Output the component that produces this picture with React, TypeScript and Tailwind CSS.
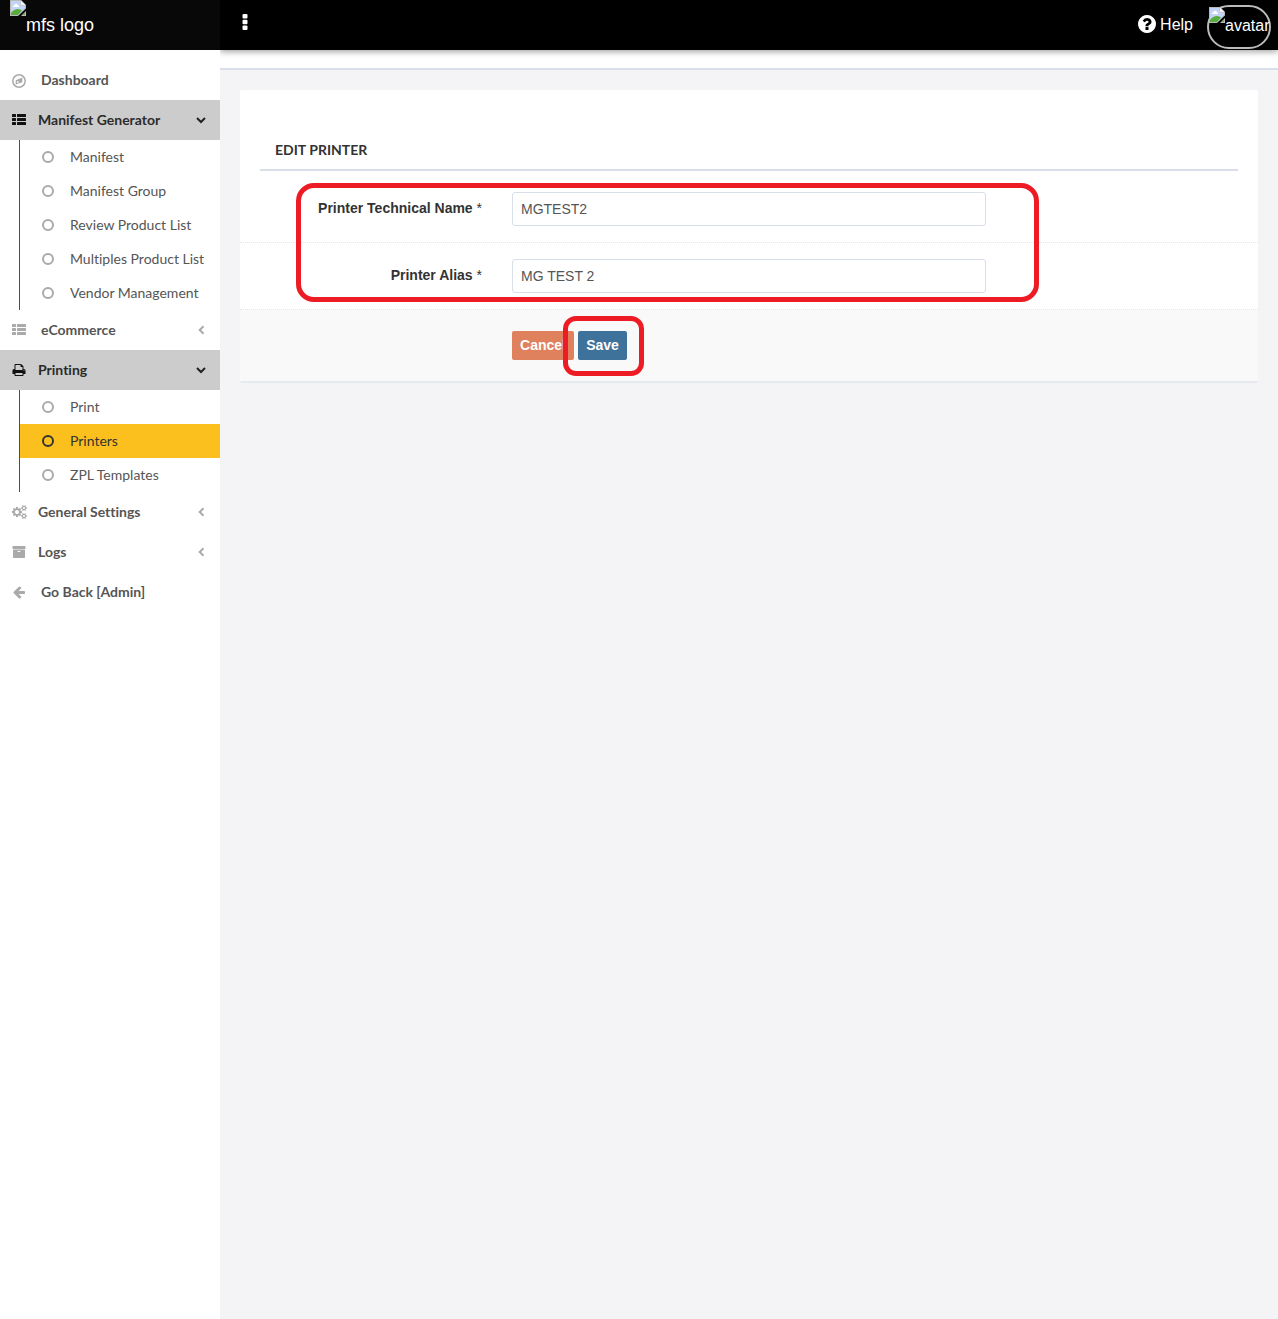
import React, { useState } from 'react';

const ICON_PATHS = {
    print: 'M448 1536h896v-256h-896v256zm0-640h896v-384h-160q-40 0-68-28t-28-68v-160h-640v640zm1152 64q0-26-19-45t-45-19-45 19-19 45 19 45 45 19 45-19 19-45zm128 0v416q0 13-9.5 22.5t-22.5 9.5h-224v160q0 40-28 68t-68 28h-960q-40 0-68-28t-28-68v-160h-224q-13 0-22.5-9.5t-9.5-22.5v-416q0-79 56.5-135.5t135.5-56.5h64v-544q0-40 28-68t68-28h672q40 0 88 20t76 48l152 152q28 28 48 76t20 88v256h64q79 0 135.5 56.5t56.5 135.5z',
    cogs: 'M896 896q0-106-75-181t-181-75-181 75-75 181 75 181 181 75 181-75 75-181zm768 512q0-52-38-90t-90-38-90 38-38 90q0 53 37.5 90.5t90.5 37.5 90.5-37.5 37.5-90.5zm0-1024q0-52-38-90t-90-38-90 38-38 90q0 53 37.5 90.5t90.5 37.5 90.5-37.5 37.5-90.5zm-384 421v185q0 10-7 19.5t-16 10.5l-155 24q-11 35-32 76 34 48 90 115 7 11 7 20 0 12-7 19-23 30-82.5 89.5t-78.5 59.5q-11 0-21-7l-115-90q-37 19-77 31-11 108-23 155-7 24-30 24h-186q-11 0-20-7.5t-10-17.5l-23-153q-34-10-75-31l-118 89q-7 7-20 7-11 0-21-8-144-133-144-160 0-9 7-19 10-14 41-53t47-61q-23-44-35-82l-152-24q-10-1-17-9.5t-7-19.5v-185q0-10 7-19.5t16-10.5l155-24q11-35 32-76-34-48-90-115-7-11-7-20 0-12 7-20 22-30 82-89t79-59q11 0 21 7l115 90q34-18 77-32 11-108 23-154 7-24 30-24h186q11 0 20 7.5t10 17.5l23 153q34 10 75 31l118-89q8-7 20-7 11 0 21 8 144 133 144 160 0 8-7 19-12 16-42 54t-45 60q23 48 34 82l152 23q10 2 17 10.5t7 19.5zm640 533v140q0 16-149 31-12 27-30 52 51 113 51 138 0 4-4 7-122 71-124 71-8 0-46-47t-52-68q-20 2-30 2t-30-2q-14 21-52 68t-46 47q-2 0-124-71-4-3-4-7 0-25 51-138-18-25-30-52-149-15-149-31v-140q0-16 149-31 13-29 30-52-51-113-51-138 0-4 4-7 4-2 35-20t59-34 30-16q8 0 46 46.5t52 67.5q20-2 30-2t30 2q51-71 92-112l6-2q4 0 124 70 4 3 4 7 0 25-51 138 17 23 30 52 149 15 149 31zm0-1024v140q0 16-149 31-12 27-30 52 51 113 51 138 0 4-4 7-122 71-124 71-8 0-46-47t-52-68q-20 2-30 2t-30-2q-14 21-52 68t-46 47q-2 0-124-71-4-3-4-7 0-25 51-138-18-25-30-52-149-15-149-31v-140q0-16 149-31 13-29 30-52-51-113-51-138 0-4 4-7 4-2 35-20t59-34 30-16q8 0 46 46.5t52 67.5q20-2 30-2t30 2q51-71 92-112l6-2q4 0 124 70 4 3 4 7 0 25-51 138 17 23 30 52 149 15 149 31z',
    archive: 'M1088 832q0-26-19-45t-45-19h-256q-26 0-45 19t-19 45 19 45 45 19h256q26 0 45-19t19-45zm576-192v960q0 26-19 45t-45 19h-1408q-26 0-45-19t-19-45v-960q0-26 19-45t45-19h1408q26 0 45 19t19 45zm64-448v256q0 26-19 45t-45 19h-1536q-26 0-45-19t-19-45v-256q0-26 19-45t45-19h1536q26 0 45 19t19 45z',
    arrowLeft: 'M1664 896v128q0 53-32.5 90.5t-84.5 37.5h-704l293 294q38 36 38 90t-38 90l-75 76q-37 37-90 37-52 0-91-37l-651-652q-37-37-37-90 0-52 37-91l651-650q38-38 91-38 52 0 90 38l75 74q38 38 38 91t-38 91l-293 293h704q52 0 84.5 37.5t32.5 90.5z',
    question: 'M1024 1376v-192q0-14-9-23t-23-9h-192q-14 0-23 9t-9 23v192q0 14 9 23t23 9h192q14 0 23-9t9-23zm256-672q0-88-55.5-163t-138.5-116-170-41q-243 0-371 213-15 24 8 42l132 100q7 6 19 6 16 0 25-12 53-68 86-92 34-24 86-24 48 0 85.5 26t37.5 59q0 38-20 61t-68 45q-63 28-115.5 86.5t-52.5 125.5v36q0 14 9 23t23 9h192q14 0 23-9t9-23q0-19 21.5-49.5t54.5-49.5q32-18 49-28.5t46-35 44.5-48 28-60.5 12.5-81zm384 192q0 209-103 385.5t-279.5 279.5-385.5 103-385.5-103-279.5-279.5-103-385.5 103-385.5 279.5-279.5 385.5-103 385.5 103 279.5 279.5 103 385.5z',
};

type IconName = 'compass' | 'list' | 'print' | 'cogs' | 'archive' | 'arrowLeft';

const MenuIcon: React.FC<{ name: IconName }> = ({ name }) => {
    if (name === 'compass') {
        return (
            <svg viewBox="0 0 14 16" className="w-[14px] h-4" fill="none" stroke="currentColor">
                <circle cx="7" cy="9" r="6.2" strokeWidth="1.5" />
                <path d="M10.3 5.5v4.7L3.7 12.500V8.300z" fill="currentColor" stroke="none" />
                <path d="M5 9.100v2.200l2.400-1.200z" fill="#fff" stroke="none" />
            </svg>
        );
    }
    if (name === 'list') {
        return (
            <svg viewBox="0 0 14 13" className="w-[14px] h-[13px]" fill="currentColor">
                {[0, 4, 8].map((y) => (
                    <g key={y}>
                        <rect x="0" y={y} width="4" height="3" rx="0.5" />
                        <rect x="5" y={y} width="9" height="3" rx="0.5" />
                    </g>
                ))}
            </svg>
        );
    }
    if (name === 'cogs') {
        return (
            <svg viewBox="0 0 1920 1792" className="w-[15px] h-[14px] shrink-0" fill="currentColor">
                <path d={ICON_PATHS.cogs} />
            </svg>
        );
    }
    return (
        <svg viewBox="0 0 1792 1792" className="w-[14px] h-[14px]" fill="currentColor">
            <path d={ICON_PATHS[name]} />
        </svg>
    );
};

const Caret: React.FC<{ open?: boolean }> = ({ open }) => (
    <svg viewBox="0 0 10 10" className="w-[10px] h-[10px]" fill="none" stroke="currentColor" strokeWidth="2">
        <path d={open ? 'M1 3l4 4 4-4' : 'M7.5 1.2L3.7 5l3.8 3.8'} />
    </svg>
);

// Placeholder shown for pictures that failed to load
const BrokenImage: React.FC = () => (
    <svg viewBox="0 0 16 16" className="w-4 h-4 shrink-0">
        <path d="M0 0h11l5 5v3.500L8 16H0z" fill="#b9b9b9" />
        <path d="M1 1h9.500v4.500H15V8L8.500 15H1z" fill="#c3d5f7" />
        <path d="M11 0.500L15.500 5H11z" fill="#f4f4f4" />
        <path d="M3 7q-0.200-1.600 1.300-1.800Q4.700 3.400 6.200 3.700 7.700 3.900 7.800 5.300 9.200 5.500 9 7z" fill="#fff" />
        <path d="M1 15v-2q3-4 7-4 2.500 0 4 1.500L8 15z" fill="#56ad3c" />
        <path d="M16 11v5h-5z" fill="#b9b9b9" />
        <path d="M15 13v2h-2z" fill="#56ad3c" />
    </svg>
);

interface MenuEntry {
    label: string;
    icon: IconName;
    wide?: boolean;
    open?: boolean;
    caret?: boolean;
    children?: string[];
}

const MENU: MenuEntry[] = [
    { label: 'Dashboard', icon: 'compass', wide: true },
    {
        label: 'Manifest Generator',
        icon: 'list',
        open: true,
        caret: true,
        children: ['Manifest', 'Manifest Group', 'Review Product List', 'Multiples Product List', 'Vendor Management'],
    },
    { label: 'eCommerce', icon: 'list', wide: true, caret: true },
    { label: 'Printing', icon: 'print', open: true, caret: true, children: ['Print', 'Printers', 'ZPL Templates'] },
    { label: 'General Settings', icon: 'cogs', caret: true },
    { label: 'Logs', icon: 'archive', caret: true },
    { label: 'Go Back [Admin]', icon: 'arrowLeft', wide: true },
];

const ACTIVE_PAGE = 'Printers';

const SubMenu: React.FC<{ items: string[] }> = ({ items }) => (
    <ul className="ml-[19px] border-l border-[#4a4f55]">
        {items.map((item) => {
            const active = item === ACTIVE_PAGE;
            return (
                <li key={item}>
                    <a
                        href="#"
                        className={`flex items-center h-[34px] pl-[22px] gap-4 text-sm ${active ? 'bg-[#fcc01e] text-[#333]' : 'text-[#555]'}`}
                    >
                        <span
                            className={`w-3 h-3 rounded-full border-2 ${active ? 'border-[#333]' : 'border-[#aaa]'}`}
                        />
                        {item}
                    </a>
                </li>
            );
        })}
    </ul>
);

const Sidebar: React.FC = () => (
    <nav className="w-[220px] shrink-0 bg-white pt-[10px] font-['Lato',sans-serif] [font-variant-ligatures:none] relative z-10">
        <ul>
            {MENU.map((entry) => (
                <li key={entry.label}>
                    <a
                        href="#"
                        className={`flex items-center h-10 pl-3 pr-[14px] text-sm font-bold ${entry.open ? 'bg-[#ccc] text-[#2b2b2b]' : 'text-[#555]'}`}
                    >
                        <span className={`flex w-[14px] shrink-0 ${entry.open ? 'text-[#111]' : 'text-[#aaa]'}`}>
                            <MenuIcon name={entry.icon} />
                        </span>
                        <span className={`flex-1 ${entry.wide ? 'pl-[15px]' : 'pl-3'}`}>{entry.label}</span>
                        {entry.caret && (
                            <span className={entry.open ? 'text-[#222]' : 'text-[#aaa]'}>
                                <Caret open={entry.open} />
                            </span>
                        )}
                    </a>
                    {entry.children && <SubMenu items={entry.children} />}
                </li>
            ))}
        </ul>
    </nav>
);

const Header: React.FC = () => (
    <header className="flex h-[50px] text-white">
        <a href="#" className="flex w-[220px] shrink-0 bg-[#080808] pl-[10px] text-lg relative z-10">
            <BrokenImage />
            <span className="pt-[11px]">mfs logo</span>
        </a>
        <div className="flex flex-1 items-center bg-black pl-[22px] pr-[7px] shadow-[0_2px_6px_rgba(0,0,0,0.35)] relative">
            <button type="button" aria-label="Toggle menu" className="pb-[6px]">
                <svg viewBox="0 0 6 16" className="w-[6px] h-4" fill="currentColor">
                    <rect x="0.5" y="0" width="5" height="4.500" rx="1" />
                    <rect x="0.5" y="5.700" width="5" height="4.500" rx="1" />
                    <rect x="0.5" y="11.400" width="5" height="4.500" rx="1" />
                </svg>
            </button>
            <a href="#" className="ml-auto flex items-center gap-1 pb-[3px] text-base">
                <svg viewBox="128 128 1536 1536" className="w-[18px] h-[18px]" fill="currentColor">
                    <path d={ICON_PATHS.question} />
                </svg>
                <span className="pt-[2px]">Help</span>
            </a>
            <a href="#" className="ml-[14px] mt-1 flex w-16 h-11 rounded-[22px] border-2 border-[#bbb] text-base">
                <BrokenImage />
                <span className="pt-[7px]">avatar</span>
            </a>
        </div>
    </header>
);

interface FieldProps {
    id: string;
    label: string;
    value: string;
    onChange: (value: string) => void;
}

const Field: React.FC<FieldProps> = ({ id, label, value, onChange }) => (
    <div className="grid grid-cols-12 border-b border-dotted border-[#e4e7ea] px-[5px] py-4">
        <label htmlFor={id} className="col-span-3 px-[15px] pt-[6px] text-right text-sm font-bold text-[#333]">
            {label} <span className="font-normal">*</span>
        </label>
        <div className="col-span-6 px-[15px]">
            <input
                id={id}
                type="text"
                value={value}
                onChange={(e) => onChange(e.target.value)}
                className="block h-[34px] w-full rounded-[3px] border border-[#d9dfe8] bg-white px-2 text-sm text-[#555]"
            />
        </div>
    </div>
);

const EditPrinterForm: React.FC = () => {
    const [technicalName, setTechnicalName] = useState('MGTEST2');
    const [alias, setAlias] = useState('MG TEST 2');

    return (
        <form className="m-5 rounded-[2px] border-b-2 border-[#e6eaee] bg-white" onSubmit={(e) => e.preventDefault()}>
            <h1 className="mx-5 border-b-2 border-[#d9dfe8] px-[15px] pt-[50px] pb-[9px] font-['Lato',sans-serif] text-sm font-bold text-[#333]">
                EDIT PRINTER
            </h1>

            {/* Fields */}
            <div className="relative mt-[5px]">
                <Field id="technical-name" label="Printer Technical Name" value={technicalName} onChange={setTechnicalName} />
                <Field id="alias" label="Printer Alias" value={alias} onChange={setAlias} />
                <div className="pointer-events-none absolute top-[7px] right-[219px] bottom-2 left-14 rounded-[18px] border-5 border-[#ed1c24]" />
            </div>

            {/* Actions */}
            <div className="grid grid-cols-12 bg-[#f9f9f9] px-[5px] py-[21px]">
                <div className="col-span-6 col-start-4 flex gap-1 px-[15px] text-sm font-bold text-white">
                    <button type="button" className="h-[29px] w-[62px] rounded-[2px] bg-[#e0815e] pb-[2px]">
                        Cancel
                    </button>
                    <div className="relative">
                        <button type="submit" className="h-[29px] w-[49px] rounded-[2px] bg-[#3f729b] pb-[2px]">
                            Save
                        </button>
                        <div className="pointer-events-none absolute -top-[15px] -right-[17px] -bottom-4 -left-[15px] rounded-[13px] border-5 border-[#ed1c24]" />
                    </div>
                </div>
            </div>
        </form>
    );
};

const App: React.FC = () => (
    <div className="flex min-h-screen flex-col bg-[#f4f4f7] font-['Liberation_Sans',Arial,sans-serif]">
        <Header />
        <div className="flex flex-1">
            <Sidebar />
            <main className="min-w-0 flex-1">
                <div className="h-5 border-b-2 border-[#d9dfe8] bg-white" />
                <EditPrinterForm />
            </main>
        </div>
    </div>
);

export default App;
